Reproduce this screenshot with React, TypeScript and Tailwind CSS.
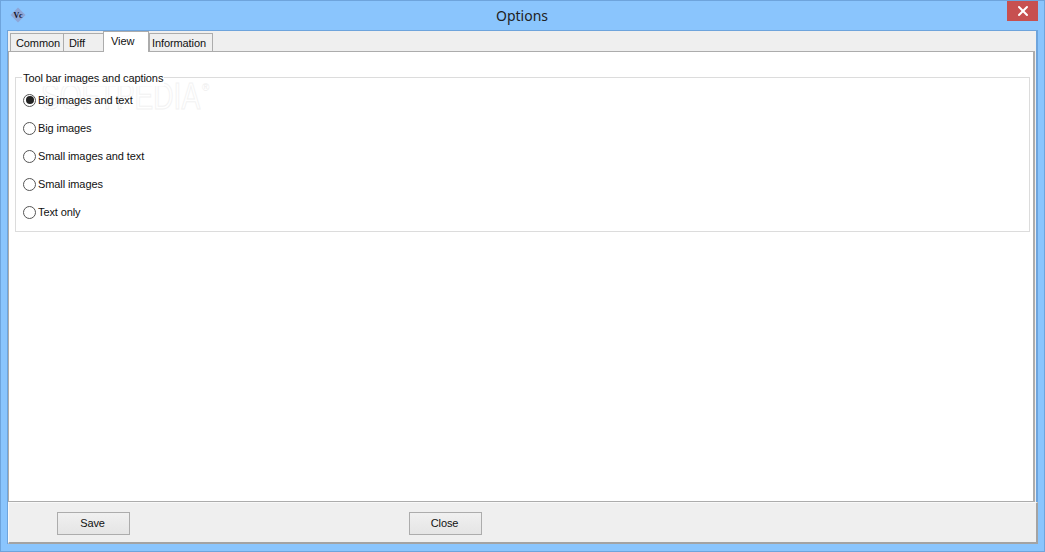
import { X } from "lucide-react";

const options = ["Big images and text", "Big images", "Small images and text", "Small images", "Text only"];

function Tab({ label, active, width, pad }: { label: string; active?: boolean; width: string; pad: string }) {
  if (active) {
    return (
      <div className={`${width} ${pad} h-[21px] -mb-px relative z-10 bg-white border border-b-0 border-[#acacac] pt-[1px] leading-[16px]`}>
        {label}
      </div>
    );
  }
  return (
    <div className={`${width} ${pad} h-[18px] bg-[#efefef] border border-b-0 border-[#acacac] -mr-px pt-[1px] leading-[16px] whitespace-nowrap`}>
      {label}
    </div>
  );
}

export default function App() {
  return (
    <div className="w-[1045px] h-[552px] flex flex-col bg-[#8ac5fd] border border-[#6ea4dc] overflow-hidden font-['Liberation_Sans',sans-serif] text-[11px] tracking-[-0.1px] text-[#111]">
      <div className="h-[29px] flex items-start">
        <svg className="ml-[9px] mt-[6px]" width="16" height="16" viewBox="0 0 16 16">
          <path d="M8 0.5 L15.5 8 L8 15.5 L0.5 8 Z" fill="#8ea6d6" />
          <text x="8" y="10.5" textAnchor="middle" fontSize="8" fontWeight="bold" fontFamily="Liberation Serif, serif" fill="#10142a">Vc</text>
        </svg>
        <div className="flex-1 text-center font-['Noto_Sans',sans-serif] text-[14px] tracking-normal leading-[30px] pl-[11px] text-[#222]">Options</div>
        <div className="w-[31px] h-[20px] mr-[6px] bg-[#c75050] flex items-center justify-center">
          <X size={16} strokeWidth={3} color="#ffffff" />
        </div>
      </div>

      <div className="h-[514px] mx-[6px] flex flex-col bg-[#efefef] border-t border-l border-r-2 border-[#6ea4dc]">
        <div className="flex items-end h-[20px] pl-[2px]">
          <Tab label="Common" width="w-[54px]" pad="pl-[5px]" />
          <Tab label="Diff" width="w-[41px]" pad="pl-[5px]" />
          <Tab label="View" active width="w-[46px]" pad="pl-[7px]" />
          <Tab label="Information" width="w-[64px]" pad="pl-[2px]" />
        </div>
        <div className="h-[451px] bg-white border border-r-2 border-[#acacac] pt-[25px] pl-[6px] pr-[3px] mr-[1px]">
          <div className="relative h-[155px] border border-[#dcdcdc]">
            <div className="absolute left-[25px] top-[1px] origin-left scale-x-[0.78] text-[36px] leading-[36px] tracking-normal text-white [-webkit-text-stroke:1px_#f2f2f2]">SOFTPEDIA</div>
            <div className="absolute left-[186px] top-[4px] text-[10px] leading-[12px] text-[#eeeeee]">®</div>
            <div className="absolute -top-[8px] left-[6px] bg-white px-px leading-[16px]">Tool bar images and captions</div>
            <div className="relative flex flex-col gap-[12px] pt-[14px] pl-[7px]">
              {options.map((o, i) => (
                <div key={o} className="h-[16px] flex items-center gap-[2px]">
                  <span className="w-[13px] h-[13px] rounded-full border border-[#555] bg-white flex items-center justify-center">
                    {i === 0 && <span className="w-[8px] h-[8px] rounded-full bg-[#222]" />}
                  </span>
                  <span className="leading-[16px]">{o}</span>
                </div>
              ))}
            </div>
          </div>
        </div>
        <div className="h-[42px] -mr-[2px] flex items-center pt-[2px] pl-[48px] border-t border-l border-[#f9f9f9] border-r-2 border-r-[#a3a3a3] border-b-2 border-b-[#a3a3a3]">
          <div className="w-[73px] h-[23px] pr-[2px] border border-[#acacac] bg-gradient-to-b from-[#f0f0f0] to-[#e5e5e5] flex items-center justify-center">Save</div>
          <div className="w-[73px] h-[23px] pr-[2px] ml-[279px] border border-[#acacac] bg-gradient-to-b from-[#f0f0f0] to-[#e5e5e5] flex items-center justify-center">Close</div>
        </div>
      </div>
    </div>
  );
}
